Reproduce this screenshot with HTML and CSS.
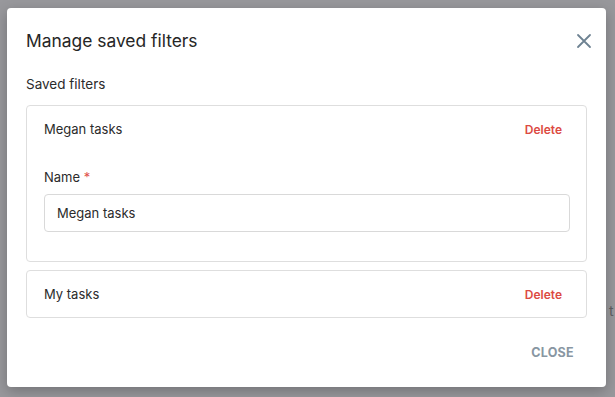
FILE: index.html
```html
<!DOCTYPE html>
<html lang="en">
<head>
    <meta charset="UTF-8">
    <meta name="viewport" content="width=device-width, initial-scale=1.0">
    <title>Manage saved filters</title>

    <link rel="stylesheet" href="styles.css">
</head>
<body>
    <div class="backdrop">
        <span class="behind-text">t</span>

        <div class="dialog">
            <div class="dialog-header">
                <h2 class="dialog-title">Manage saved filters</h2>
                <button class="icon-btn" aria-label="Close">
                    <svg width="16" height="16" viewBox="0 0 16 16">
                        <path d="M2 2 L14 14 M14 2 L2 14" stroke="#6e8292" stroke-width="1.8" fill="none" stroke-linecap="round"/>
                    </svg>
                </button>
            </div>

            <div class="section-label">Saved filters</div>

            <div class="filter-card">
                <div class="filter-row">
                    <span class="filter-name">Megan tasks</span>
                    <button class="delete-btn">Delete</button>
                </div>
                <div class="filter-body">
                    <label class="field-label">Name <span class="req">*</span></label>
                    <input class="text-input" type="text" value="Megan tasks">
                </div>
            </div>

            <div class="filter-card">
                <div class="filter-row">
                    <span class="filter-name">My tasks</span>
                    <button class="delete-btn">Delete</button>
                </div>
            </div>

            <div class="dialog-footer">
                <button class="close-btn">CLOSE</button>
            </div>
        </div>
    </div>
</body>
</html>
```

FILE: styles.css
```css
* {
    box-sizing: border-box;
}

body {
    margin: 0;
    font-family: "Inter", "Noto Sans", sans-serif;
    color: #2b2b2b;
}

.backdrop {
    position: relative;
    width: 615px;
    height: 397px;
    padding: 8px 9px 0 7px;
    background-color: #98989c;
    overflow: hidden;
}

/* page text peeking out from under the modal */
.behind-text {
    position: absolute;
    left: 609px;
    top: 302px;
    font-size: 14px;
    color: #5f5f63;
}

.dialog {
    position: relative;
    height: 379px;
    padding: 0 19px;
    background-color: #fff;
    border-radius: 4px;
    box-shadow: 0 4px 14px rgba(0, 0, 0, 0.25);
}

.dialog-header {
    display: flex;
    align-items: center;
    justify-content: space-between;
    padding-top: 22px;
    height: 44px;
}

.dialog-title {
    margin: 0;
    font-size: 17.4px;
    font-weight: 400;
    line-height: 22px;
    color: #262626;
}

.icon-btn {
    display: flex;
    align-items: center;
    justify-content: center;
    width: 24px;
    height: 24px;
    margin-right: -9px;
    padding: 0;
    border: none;
    background: none;
}

.section-label {
    margin: 22px 0 11px;
    font-size: 13.5px;
    line-height: 20px;
    color: #2b2b2b;
}

.filter-card {
    border: 1px solid #dedede;
    border-radius: 4px;
    margin-bottom: 8px;
}

.filter-row {
    display: flex;
    align-items: center;
    justify-content: space-between;
    height: 46px;
    padding: 0 16px 0 17px;
}

.filter-name {
    font-size: 13px;
    color: #2b2b2b;
}

.delete-btn {
    padding: 6px 8px;
    border: none;
    background: none;
    font-family: inherit;
    font-size: 12px;
    font-weight: 600;
    color: #dc4a42;
}

.filter-body {
    display: flex;
    flex-direction: column;
    padding: 16px 16px 29px 17px;
}

.field-label {
    font-size: 13px;
    line-height: 18px;
    margin-bottom: 8px;
    color: #2b2b2b;
}

.req {
    color: #e0524b;
}

.text-input {
    height: 38px;
    padding: 0 12px;
    border: 1px solid #d9d9d9;
    border-radius: 4px;
    font-family: inherit;
    font-size: 13px;
    color: #2b2b2b;
}

.dialog-footer {
    display: flex;
    justify-content: flex-end;
    margin-top: 16px;
}

.close-btn {
    height: 36px;
    padding: 0 13px;
    border: none;
    background: none;
    font-family: inherit;
    font-size: 12.5px;
    font-weight: 700;
    letter-spacing: 0.3px;
    color: #8896a2;
}
```
